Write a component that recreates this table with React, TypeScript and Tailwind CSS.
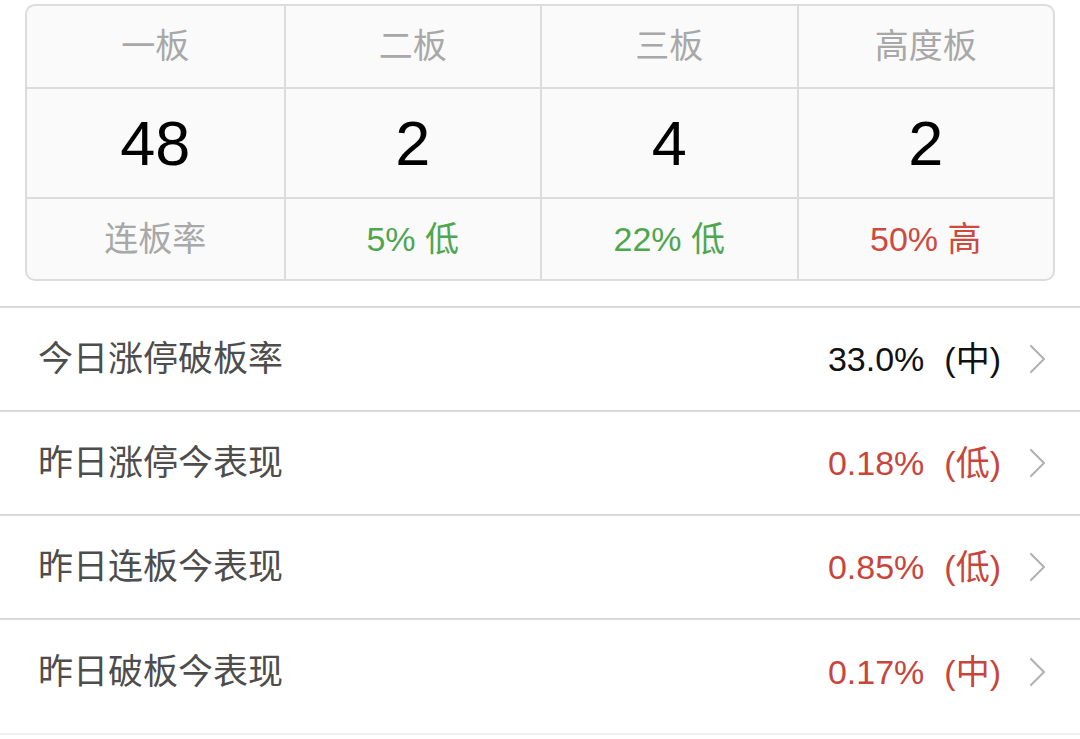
const cols = [
  { head: "一板", num: "48", foot: "连板率", color: "text-[#a8a8a8]" },
  { head: "二板", num: "2", foot: "5% 低", color: "text-[#4ea64f]" },
  { head: "三板", num: "4", foot: "22% 低", color: "text-[#4ea64f]" },
  { head: "高度板", num: "2", foot: "50% 高", color: "text-[#cc4a40]" },
];

const rows = [
  { label: "今日涨停破板率", value: "33.0%", tag: "(中)", color: "text-[#111]" },
  { label: "昨日涨停今表现", value: "0.18%", tag: "(低)", color: "text-[#c8453b]" },
  { label: "昨日连板今表现", value: "0.85%", tag: "(低)", color: "text-[#c8453b]" },
  { label: "昨日破板今表现", value: "0.17%", tag: "(中)", color: "text-[#c8453b]" },
];

const font = "font-['Liberation_Sans','Noto_Sans_CJK_SC',sans-serif]";

function Chevron() {
  return (
    <svg width="18" height="30" viewBox="0 0 18 30" className="ml-[28px] shrink-0">
      <path d="M2 2 L15 15 L2 28" fill="none" stroke="#b3b3b3" strokeWidth="2.2" strokeLinecap="round" strokeLinejoin="round" />
    </svg>
  );
}

export default function App() {
  return (
    <div className={`w-[1080px] h-[739px] bg-white overflow-hidden ${font}`}>
      <div className="pt-[4px] px-[25px]">
        <div className="grid grid-cols-4 border-2 border-[#dcdcdc] rounded-[10px] bg-[#fafafa] overflow-hidden">
          {cols.map((c, i) => (
            <div
              key={c.head}
              className={`flex flex-col ${i > 0 ? "border-l-2 border-[#dcdcdc]" : ""}`}
            >
              <div className="h-[83px] flex items-center justify-center text-[34px] text-[#a8a8a8] border-b-2 border-[#dcdcdc]">
                {c.head}
              </div>
              <div className="h-[110px] flex items-center justify-center text-[63px] text-black border-b-2 border-[#dcdcdc]">
                {c.num}
              </div>
              <div className={`h-[80px] flex items-center justify-center text-[34px] ${c.color}`}>
                {c.foot}
              </div>
            </div>
          ))}
        </div>
      </div>

      <div className="mt-[25px] h-[429px] border-t-2 border-b-2 border-t-[#d9d9d9] border-b-[#efefef]">
        {rows.map((r, i) => (
          <div
            key={r.label}
            className={`h-[104px] flex items-center pl-[38px] pr-[33px] ${i < 3 ? "border-b-2 border-[#d9d9d9]" : ""}`}
          >
            <span className="text-[35px] text-[#4d4d4d]">{r.label}</span>
            <span className={`ml-auto text-[34px] ${r.color}`}>
              {r.value}
              <span className="ml-[20px]">{r.tag}</span>
            </span>
            <Chevron />
          </div>
        ))}
      </div>
    </div>
  );
}
